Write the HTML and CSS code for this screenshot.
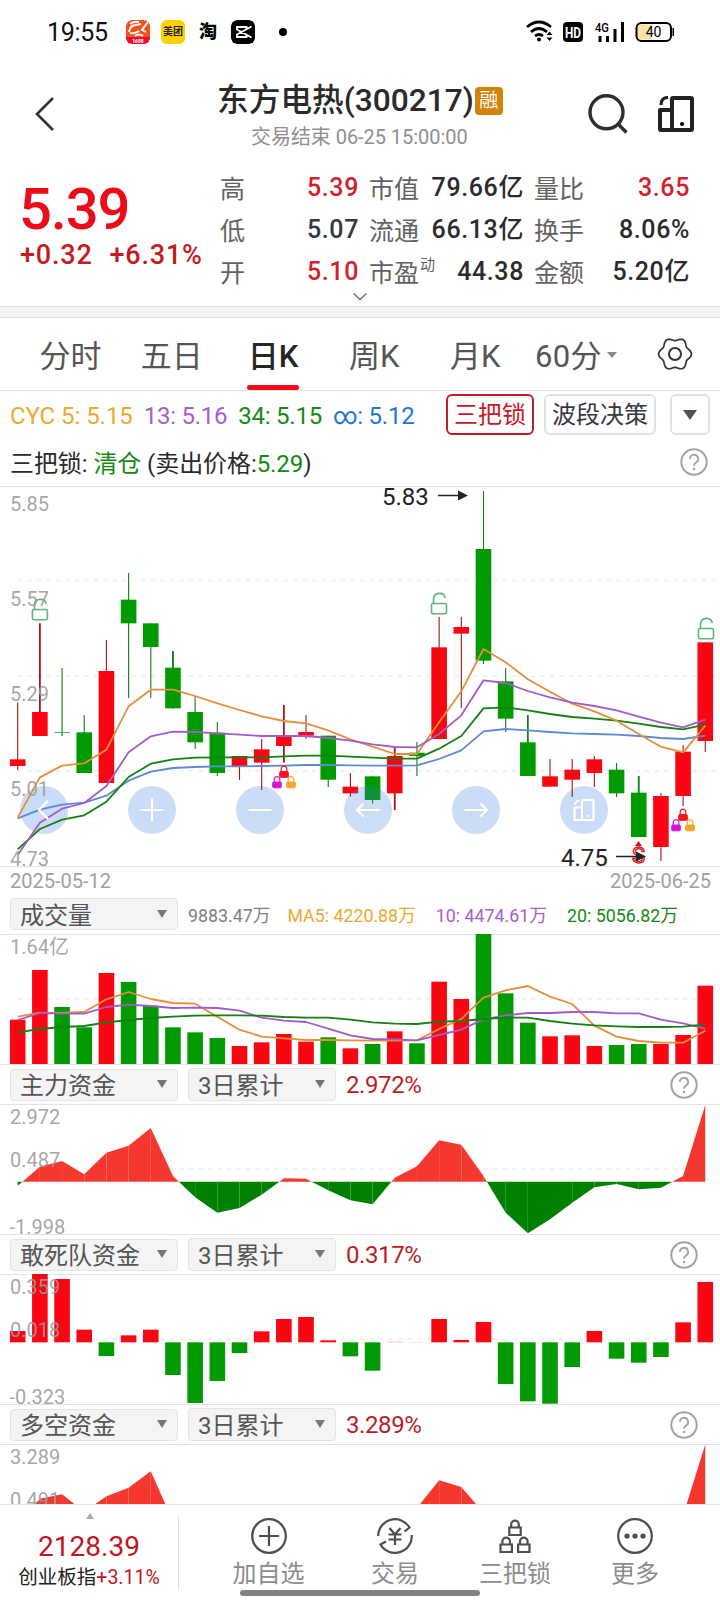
FILE: index.html
```html
<!DOCTYPE html>
<html lang="zh-CN">
<head>
<meta charset="utf-8">
<title>东方电热(300217)</title>
<link rel="stylesheet" href="styles.css">
</head>
<body>
<svg class="defs" width="0" height="0">
  <defs>
    <g id="unlock" fill="none" stroke="#5cb878" stroke-width="1.6"><rect x="-7.5" y="0" width="15" height="10.3" rx="1.5"/><path d="M-5.5 0V-5A6 6 0 0 1 6.3 -5.4"/></g>
    <g id="lock"><rect x="-4.300" y="0.500" width="8.600" height="5.800" rx="1"/><path d="M-2.800 1V-2A2.800 2.800 0 0 1 2.800 -2V1" fill="none" stroke-width="1.2"/></g>
    <g id="trio"><use href="#lock" x="-7" y="10.5" fill="#d715cf" stroke="#d715cf"/><use href="#lock" x="7" y="10.5" fill="#f3a62b" stroke="#f3a62b"/><use href="#lock" fill="#f51521" stroke="#f51521"/></g>
    <g id="phone" fill="none" stroke-width="4" stroke-linejoin="round"><rect x="14" y="2" width="20" height="32" rx="1"/><path d="M14 14H2V33Q2 34 3 34H14"/><path d="M10 1.500Q3 1.500 3 9" stroke-width="3.200"/></g>
    <g id="help"><circle cx="14" cy="14" r="12.7" fill="none" stroke="#a3a3a3" stroke-width="2"/><path d="M9.9 11A4.1 4.1 0 1 1 16 14.5Q14 15.8 14 17.8" fill="none" stroke="#a3a3a3" stroke-width="1.9"/><circle cx="14" cy="21" r="1.3" fill="#a3a3a3"/></g>
  </defs>
</svg>

<header class="status">
  <span class="clock">19:55</span>
  <svg class="app ali" width="24" height="24" viewBox="0 0 24 24"><defs><clipPath id="r1"><rect width="24" height="24" rx="6"/></clipPath></defs><g clip-path="url(#r1)"><rect width="24" height="24" fill="#f4511b"/><rect y="17" width="24" height="7" fill="#e8102c"/><path d="M4 4Q8 1 13 2M3 12Q4 5 10 5L15 4M4 13Q9 14 13 11M22 2L16 10L20 12M9 16Q13 13 17 16" fill="none" stroke="#fff" stroke-width="1.9"/><text x="12" y="23" text-anchor="middle" font-size="5" font-weight="700" fill="#fff">1688</text></g></svg>
  <span class="app meituan">美团</span>
  <span class="app tao">淘</span>
  <svg class="app" width="24" height="24" viewBox="0 0 24 24"><rect width="24" height="24" rx="6" fill="#000"/><path d="M20.500 6.500L6 14.500V17H15.500V14.500M20.500 17.500L6 9.500V7H15.500V9.500" fill="none" stroke="#fff" stroke-width="1.9"/></svg>
  <i class="dot"></i>
  <svg class="signals" width="150" height="24" viewBox="0 0 150 24">
    <g fill="none" stroke="#000" stroke-width="2.7"><path d="M1 7Q13 -3 25 7"/><path d="M5 12Q13 5 21 12"/><path d="M9 16Q13 13 17 16"/></g>
    <circle cx="13" cy="19.500" r="2" /><path d="M20.500 15l3-3.500 3 3.500zM20.500 17.500l3 3.500 3-3.500z"/>
    <rect x="37" y="2" width="20" height="20" rx="4"/><text x="47" y="17.500" text-anchor="middle" fill="#fff" font-size="15" font-weight="700" textLength="16" lengthAdjust="spacingAndGlyphs">HD</text>
    <text x="69" y="12" font-size="13" font-weight="500" textLength="14" lengthAdjust="spacingAndGlyphs">4G</text>
    <path d="M72.500 16h3v6h-3zM80 16h3v6h-3zM87.500 9h3v13h-3zM95 2h3v20h-3z"/>
    <rect x="110.500" y="3" width="34.500" height="18" rx="5" fill="#fff" stroke="#000" stroke-width="2"/><path d="M125 4.500H116Q112 4.500 112 8.500V15.500Q112 19.500 116 19.500H125Z" fill="#fce2a5"/><path d="M146.500 8h1.500v8h-1.500z"/>
    <text x="127.500" y="17" text-anchor="middle" font-size="14">40</text>
  </svg>
</header>

<section class="title-bar">
  <svg class="back" width="24" height="38" viewBox="0 0 24 38"><path d="M20 3L4 19L20 35" fill="none" stroke="#333" stroke-width="2.6"/></svg>
  <div class="heading">
    <h1>东方电热(300217)<span class="badge">融</span></h1>
    <p>交易结束 06-25 15:00:00</p>
  </div>
  <svg class="search" width="42" height="42" viewBox="0 0 42 42"><g fill="none" stroke="#2d2d2d" stroke-width="3.400"><circle cx="19.500" cy="19.300" r="16.500"/><path d="M31 31L39.500 39.500"/></g></svg>
  <svg class="rotate" width="36" height="36" viewBox="0 0 36 36"><use href="#phone" stroke="#222"/><circle cx="24" cy="28" r="2"/></svg>
</section>

<section class="quote">
  <div class="price">
    <strong>5.39</strong>
    <span>+0.32</span><span>+6.31%</span>
  </div>
  <dl class="stats">
    <div><dt>高</dt><dd class="up">5.39</dd></div><div><dt>市值</dt><dd>79.66亿</dd></div><div><dt>量比</dt><dd class="up">3.65</dd></div>
    <div><dt>低</dt><dd class="flat">5.07</dd></div><div><dt>流通</dt><dd>66.13亿</dd></div><div><dt>换手</dt><dd>8.06%</dd></div>
    <div><dt>开</dt><dd class="up">5.10</dd></div><div><dt>市盈<sup>动</sup></dt><dd>44.38</dd></div><div><dt>金额</dt><dd>5.20亿</dd></div>
  </dl>
  <svg class="expand" width="16" height="9" viewBox="0 0 16 9"><path d="M1.500 1.500L8 7.500L14.500 1.500" fill="none" stroke="#777" stroke-width="1.500"/></svg>
</section>
<div class="divider"></div>

<nav class="tabs">
  <span>分时</span><span>五日</span><span class="active">日K</span><span>周K</span><span>月K</span><span class="drop">60分<i></i></span>
  <svg width="36" height="36" viewBox="-18 -18 36 36"><path id="gear" fill="none" stroke="#333" stroke-width="1.700" stroke-linejoin="round"/><circle r="6" fill="none" stroke="#333" stroke-width="2"/></svg>
</nav>

<section class="indicator">
  <div class="cyc"><span class="c-orange">CYC 5: 5.15</span><span class="c-purple">13: 5.16</span><span class="c-green">34: 5.15</span><span class="c-blue">∞: 5.12</span></div>
  <button class="chip on">三把锁</button><button class="chip">波段决策</button><button class="chip menu"><i></i></button>
</section>
<section class="signal">
  <p>三把锁: <b>清仓</b> (卖出价格:<b>5.29</b>)</p>
  <svg width="28" height="28"><use href="#help"/></svg>
</section>

<svg class="chart" id="kline" width="720" height="380" viewBox="0 0 720 380">
  <path class="grid" d="M18 94.500H717M18 190H717M18 285H717"/>
  <g class="pads"><circle cx="44" cy="324" r="24"/><circle cx="152" cy="324" r="24"/><circle cx="260" cy="324" r="24"/><circle cx="476" cy="324" r="24"/><circle cx="584" cy="324" r="24"/></g>
  <g class="plot"></g>
  <use href="#unlock" x="39.900" y="123.500"/><use href="#unlock" x="439" y="117.500"/><use href="#unlock" x="706" y="142.500"/>
  <use href="#trio" x="284" y="285"/><use href="#trio" x="683" y="328"/>
  <path d="M635 360l3.500-5 3.500 5z" fill="#d01622"/>
  <text x="638.500" y="377" text-anchor="middle" font-size="22" fill="#fff" stroke="#d01622" stroke-width="1.300">S</text>
  <g class="axis"><text x="10" y="25.300">5.85</text><text x="10" y="120">5.57</text><text x="10" y="215">5.29</text><text x="10" y="310">5.01</text><text x="10" y="379.500">4.73</text></g>
  <g class="mark"><text x="382" y="19">5.83</text><text x="561" y="379.500">4.75</text><path d="M438 9.500H460M616 370.500H638" stroke="#222" stroke-width="1.300"/><path d="M458 4.500l10 5-10 5zM636 365.500l10 5-10 5z"/></g>
  <g fill="none" stroke="#fff" stroke-width="2"><path d="M48 315L39 324L48 333M140.500 324H163.500M152 312.500V335.500M248.500 324H271.500M379.500 324H357M363.500 317.500L357 324L363.500 330.500M464.500 324H487M480.500 317.500L487 324L480.500 330.500"/><rect x="582" y="314" width="11.500" height="20" rx="1"/><path d="M582 321.500H574.500V334H582M579.500 314.500Q575 315 575 319"/></g><circle cx="588" cy="330" r="1.200" fill="#fff"/>
</svg>
<div class="dates"><span>2025-05-12</span><span>2025-06-25</span></div>

<div class="panel-head">
  <button class="select">成交量<i></i></button>
  <div class="vols"><span>9883.47万</span><span class="c-orange">MA5: 4220.88万</span><span class="c-purple">10: 4474.61万</span><span class="c-green">20: 5056.82万</span></div>
</div>
<svg class="chart sub" id="volume" width="720" height="130" viewBox="0 0 720 130">
  <path class="grid" d="M18 65H697"/><g class="plot"></g><g class="axis"><text x="10" y="20">1.64亿</text></g>
</svg>

<div class="panel-head"><button class="select">主力资金<i></i></button><button class="select short">3日累计<i></i></button><b>2.972%</b><svg width="28" height="28"><use href="#help"/></svg></div>
<svg class="chart sub" id="main" width="720" height="130" viewBox="0 0 720 130">
  <path class="grid" d="M18 65H697"/><g class="plot"></g><g class="axis"><text x="10" y="20">2.972</text><text x="10" y="62.700">0.487</text><text x="9.500" y="129.700">-1.998</text></g>
</svg>

<div class="panel-head"><button class="select">敢死队资金<i></i></button><button class="select short">3日累计<i></i></button><b>0.317%</b><svg width="28" height="28"><use href="#help"/></svg></div>
<svg class="chart sub" id="squad" width="720" height="130" viewBox="0 0 720 130">
  <path class="grid" d="M18 65H697"/><g class="plot"></g><g class="axis"><text x="10" y="20">0.359</text><text x="10" y="62.700">0.018</text><text x="9.500" y="129.700">-0.323</text></g>
</svg>

<div class="panel-head"><button class="select">多空资金<i></i></button><button class="select short">3日累计<i></i></button><b>3.289%</b><svg width="28" height="28"><use href="#help"/></svg></div>
<svg class="chart sub" id="bulls" width="720" height="60" viewBox="0 0 720 60">
  <g class="plot"></g><g class="axis"><text x="10" y="20">3.289</text><text x="10" y="62.700">0.491</text></g>
</svg>

<footer>
  <div class="index"><i></i><strong>2128.39</strong><p>创业板指<em>+3.11%</em></p></div>
  <div class="action"><svg width="40" height="40" viewBox="-20 -20 40 40"><circle r="16.800"/><path d="M-10 0H10M0-10V10"/></svg>加自选</div>
  <div class="action"><svg width="40" height="40" viewBox="-20 -20 40 40"><path d="M-16.800 0A16.800 16.800 0 0 1 14.500-8.500L9.500-4.500M16.800-1A16.800 16.800 0 0 1-14.500 8.500L-9 5.500"/><path d="M-5.500-8L0-1.500L5.500-8M-6.500-1.500H6.500M-6.500 3.500H6.500M0-1.500V9"/></svg>交易</div>
  <div class="action"><svg width="40" height="40" viewBox="-20 -20 40 40"><path d="M-5.700-8.500H5.700V-1H-5.700ZM-3.800-8.500V-11.500A3.800 3.800 0 0 1 3.800-11.500V-8.500M-14.500 8.500H-3.100V16H-14.500ZM-12.600 8.500V5.500A3.800 3.800 0 0 1-5 5.500V8.500M3.100 8.500H14.500V16H3.100ZM5 8.500V5.500A3.800 3.800 0 0 1 12.600 5.500V8.500"/></svg>三把锁</div>
  <div class="action"><svg width="40" height="40" viewBox="-20 -20 40 40"><circle r="16.800"/><g fill="#4c4d55" stroke="none"><circle cx="-8" r="2.600"/><circle r="2.600"/><circle cx="8" r="2.600"/></g></svg>更多</div>
  <div class="home"></div>
</footer>
<script src="charts.js"></script>
</body>
</html>
```

FILE: styles.css
```css
* { box-sizing: border-box; margin: 0; padding: 0; }
body { width: 720px; height: 1600px; overflow: hidden; background: #fff; color: #2b2b2b; font-family: Roboto, "Noto Sans CJK SC", sans-serif; position: relative; }
svg { display: block; flex: none; }
svg text { font-family: Roboto, "Noto Sans CJK SC", sans-serif; }
.defs { position: absolute; }
i { font-style: normal; }
button { font: inherit; color: inherit; }

.status { height: 62px; padding: 2px 0 0 47px; display: flex; align-items: center; }
.clock { width: 79px; font-size: 25px; color: #111; white-space: nowrap; letter-spacing: -.3px; }
.app { width: 24px; height: 24px; border-radius: 6px; margin-right: 11px; }
.meituan { background: #ffd100; font-size: 10px; font-weight: 700; line-height: 24px; text-align: center; color: #222; }
.tao { font-size: 18px; line-height: 24px; font-weight: 900; text-align: center; color: #000; }
.dot { width: 8px; height: 8px; border-radius: 50%; background: #000; margin-left: 13px; }
.signals { margin-left: 239px; }

.title-bar { height: 106px; display: flex; }
.back { margin: 33px 0 0 33px; }
.heading { width: 381px; margin-left: 160px; padding-top: 18px; }
h1 { font-size: 31.7px; font-weight: 500; line-height: 42px; display: flex; align-items: center; color: #2a2a2a; white-space: nowrap; }
.badge { width: 28px; height: 28px; border-radius: 4px; background: #d3820c; color: #fff; font-size: 19px; font-weight: 400; line-height: 27px; margin: 0 0 1px 1px; text-align: center; }
.heading p { font-size: 20px; line-height: 30px; color: #8f8f8f; padding-left: 34px; white-space: nowrap; letter-spacing: -.05px; }
.search { margin: 31px 29px 0 -11px; }
.rotate { margin-top: 34px; }

.quote { height: 138px; display: grid; grid-template-columns: 199px 1fr; padding-left: 21px; position: relative; }
.price { padding-top: 9px; color: #c61a22; font-size: 27px; font-weight: 500; line-height: 28px; white-space: nowrap; letter-spacing: .8px; }
.price strong { display: block; font-size: 58px; font-weight: 500; line-height: 65px; color: #ec0b19; letter-spacing: -1.2px; margin: 0 0 -1px -2px; }
.price span { margin-right: 17px; }
.price span:first-of-type { margin-left: -1px; }
.stats { display: grid; grid-template-columns: 138px 154px 155px; column-gap: 11px; grid-auto-rows: 42px; padding-top: 1px; }
.stats div { display: flex; justify-content: space-between; align-items: center; line-height: 42px; }
.stats dt { font-size: 25px; color: #626262; white-space: nowrap; }
.stats dd { font-size: 25px; font-weight: 500; white-space: nowrap; letter-spacing: .6px; padding-bottom: 4px; margin-right: -1px; }
.stats sup { font-size: 15px; line-height: 1; vertical-align: 12px; margin-left: 1px; }
.up { color: #d2222b; }
.flat { color: #343843; }
.expand { position: absolute; left: 352px; top: 124px; }
.divider { height: 12px; background: #f4f4f4; border: solid #e0e0e0; border-width: 1px 0; }

.tabs { height: 73px; border-bottom: 1px solid #e3e3e3; display: flex; padding-left: 20px; font-size: 31px; line-height: 78px; color: #555; }
.tabs span { width: 101.2px; text-align: center; white-space: nowrap; }
.tabs .active { font-weight: 500; color: #252525; display: flex; flex-direction: column; align-items: center; }
.tabs .active::after { content: ""; width: 52px; height: 6px; border-radius: 3px; background: #f20a1a; margin-top: -11px; }
.tabs .drop { display: flex; padding-left: 9px; letter-spacing: .3px; }
.tabs .drop i { height: 0; border: solid transparent; border-width: 6px 5px 0; border-top-color: #888; margin: 34px 0 0 5px; }
.tabs svg { margin: 18px 0 0 30px; }

.indicator { height: 48px; display: flex; padding: 3px 10px 0 10px; font-size: 24px; }
.cyc { display: flex; gap: 11px; width: 436px; line-height: 44px; white-space: nowrap; letter-spacing: -.25px; }
.cyc span:first-child { letter-spacing: -.05px; }
.c-orange { color: #eba92f; }
.c-purple { color: #a95dcb; }
.c-green { color: #138a13; }
.c-blue { color: #2078d4; }
.chip { height: 41px; border: 2px solid #e2e2e4; border-radius: 6px; background: #fff; line-height: 36px; width: 112px; margin-right: 14px; color: #343843; white-space: nowrap; }
.chip.on { width: 88px; border-color: #bd1f29; color: #c81824; margin-right: 10px; }
.chip.menu { width: 40px; margin: 0; display: flex; align-items: center; justify-content: center; }
.chip i { border: solid transparent; border-width: 10px 7px 0; border-top-color: #50525a; }
.signal { height: 47px; display: flex; justify-content: space-between; padding: 9px 12px 0 10px; font-size: 24px; line-height: 32px; letter-spacing: -.08px; }
.signal b { font-weight: 400; color: #138a13; }

.chart { background: linear-gradient(#e3e3e3, #e3e3e3) top / 100% 1px no-repeat; overflow: hidden; }
.grid { stroke: #ededed; stroke-width: 1.5; stroke-dasharray: 4 5.500; fill: none; }
.axis { font-size: 20px; fill: #9b9b9b; fill-opacity: .9; }
.mark { font-size: 24px; fill: #222; }
.pads { fill: #cbdcf6; }
.dates { height: 31px; border-top: 1px solid #e3e3e3; display: flex; justify-content: space-between; padding: 0 9px 0 10px; font-size: 20px; line-height: 29px; color: #a0a0a0; }

.panel-head { height: 40px; border-top: 1px solid #e3e3e3; display: flex; align-items: center; padding: 0 22px 0 10px; }
.dates + .panel-head { height: 37px; border-top: 0; padding-bottom: 3px; }
.select { width: 168px; height: 32px; border: 1px solid #e4e4e4; border-radius: 4px; background: #f4f4f4; color: #555; font-size: 24px; line-height: 30px; display: flex; align-items: center; justify-content: space-between; padding: 3px 10px 0 9px; white-space: nowrap; margin-right: 10px; }
.select.short { width: 148px; height: 33px; margin: -1px 10px 0 0; }
.select i { border: solid transparent; border-width: 8px 5.5px 0; border-top-color: #777; margin-bottom: 4px; }
.panel-head b { font-weight: 400; font-size: 24px; color: #bc1d25; flex: 1; letter-spacing: -.4px; }
.vols { display: flex; font-size: 17.8px; color: #808080; gap: 20px; white-space: nowrap; margin-top: -1px; }
.vols span:first-child { margin-right: -3px; }

footer { height: 96px; border-top: 1px solid #e3e3e3; display: flex; position: relative; }
.index { width: 179px; height: 75px; margin-top: 10px; border-right: 1px solid #e0e0e0; text-align: center; }
.index i { display: block; width: 0; border: solid transparent; border-width: 0 4px 6px; border-bottom-color: #aaa; margin: -2px 0 0 86px; }
.index strong { display: block; font-size: 28px; font-weight: 400; line-height: 34px; margin-top: 11px; color: #c1151e; }
.index p { font-size: 19.500px; line-height: 28px; white-space: nowrap; color: #222; }
.index em { font-style: normal; color: #c1151e; font-size: 19.500px; }
.action { width: 120px; display: flex; flex-direction: column; align-items: center; padding-top: 11px; font-size: 24px; line-height: 37px; color: #8c8c8c; }
.index + .action { margin-left: 27px; width: 125px; margin-right: 4px; }
.action svg { fill: none; stroke: #4c4d55; stroke-width: 2.2; }
.home { position: absolute; left: 240px; top: 85px; width: 240px; height: 6px; border-radius: 3px; background: #828282; }
```

FILE: charts.js
```js
const NS = "http://www.w3.org/2000/svg";
const RED = "#fa0512", GREEN = "#029a02";
const X = i => 17.7 + 22.18 * i;

function add(id, tag, attrs) {
  const el = document.createElementNS(NS, tag);
  for (const k in attrs) el.setAttribute(k, attrs[k]);
  document.querySelector("#" + id + " .plot").appendChild(el);
}
function rect(id, i, top, bottom, fill) {
  add(id, "rect", { x: X(i) - 7.8, y: top, width: 15.6, height: Math.max(bottom - top, 0.7), fill });
}
function line(id, values, off, stroke) {
  add(id, "polyline", { points: values.map((v, i) => X(i) + "," + (v / 3 - off)).join(" "), fill: "none", stroke, "stroke-width": 1.8, "stroke-linejoin": "round" });
}

const dirs = "rrggrgggggrrrrgrgrgrrgggrrrggrrr";
const colour = i => dirs[i] === "r" ? RED : GREEN;

// high, low, body top, body bottom
const candles = [[667,870,838,858],[430,768,696,768],[564,768,757,759],[705,879,757,879],[480,909,573,909],[279,654,359,430],[430,654,430,501],[513,685,563,685],[648,807,696,787],[726,888,758,879],[828,900,828,858],[777,930,808,848],[675,848,767,798],[705,776,756,767],[767,921,767,899],[879,950,920,940],[889,971,889,960],[800,990,828,940],[786,888,818,828],[411,777,502,777],[411,684,441,461],[33,552,207,542],[564,756,604,716],[705,888,787,888],[837,920,889,920],[837,951,869,899],[828,921,838,879],[849,951,869,940],[888,1071,938,1071],[939,1143,948,1101],[795,978,815,948],[487,816,487,783]];
const heavy = [1, 7, 12, 17, 23, 28];
candles.forEach(([h, l, t, b], i) => {
  const w = heavy.includes(i) ? 1.8 : 1.1;
  add("kline", "rect", { x: X(i) - w / 2, y: h / 3 - 6, width: w, height: (l - h) / 3, fill: dirs[i] === "r" ? "#a5161c" : "#127d12" });
  rect("kline", i, t / 3 - 6, b / 3 - 6, colour(i));
});
// This round button tints the two candles it overlaps.
add("kline", "circle", { cx: 368, cy: 324, r: 24, fill: "#3277db", "fill-opacity": 0.25 });
line("kline", [1015,989,974,968,947,902,875,864,861,859,859,858,857,855,855,856,857,857,856,837,811,754,747,751,756,760,762,764,768,774,777,767], 6, "#5b8bd0");
line("kline", [1108,1047,1019,1006,965,891,851,838,833,832,832,832,829,827,827,830,833,836,836,806,768,685,682,691,702,711,716,722,731,741,748,734], 6, "#138013");
line("kline", [1013,892,857,850,809,679,629,629,648,670,690,709,723,730,751,778,800,822,822,727,634,507,547,598,635,671,694,722,762,800,817,737], 6, "#e29138");
line("kline", [1125,1028,986,969,918,817,769,755,756,760,764,768,768,768,774,782,793,801,802,762,706,601,609,633,652,668,678,691,710,728,742,719], 6, "#a45bc8");

[479,330,441,502,339,366,437,502,517,534,558,547,522,545,532,565,552,514,550,365,417,222,400,488,529,526,558,555,552,552,525,377]
  .forEach((v, i) => rect("volume", i, v / 3 - 74, 130, colour(i)));
line("volume", [470,458,459,456,418,396,417,429,431,470,509,530,535,540,540,541,542,542,541,507,477,413,391,378,410,432,497,530,543,548,548,512], 74, "#e29138");
line("volume", [480,459,461,461,441,434,438,444,443,444,452,473,482,486,506,526,537,538,541,525,509,478,466,459,459,456,456,460,460,479,490,506], 74, "#a45bc8");
line("volume", [517,507,501,498,487,480,474,470,467,466,466,467,471,473,473,479,487,491,492,485,483,477,473,473,483,491,496,499,501,501,500,493], 74, "#138013");

// Areas change colour where they cross the zero line.
function area(id, values, zero, off) {
  const poly = (pts, up) => add(id, "polygon", { points: pts.map(([x, v]) => x + "," + (v / 3 - off)).join(" "), fill: up ? "#f43830" : "#008000" });
  for (let i = 0; i + 1 < values.length; i++) {
    const a = values[i], b = values[i + 1], x1 = X(i), x2 = X(i + 1);
    if ((a - zero) * (b - zero) < 0) {
      const m = x1 + (x2 - x1) * (zero - a) / (b - a);
      poly([[x1, zero], [x1, a], [m, zero]], a < zero);
      poly([[m, zero], [x2, b], [x2, zero]], b < zero);
    } else {
      poly([[x1, zero], [x1, a], [x2, b], [x2, zero]], a < zero || b < zero);
    }
  }
}
area("main", [977,920,903,943,878,857,804,948,1012,1058,1044,1004,955,956,991,1021,1033,953,919,841,854,948,1058,1120,1078,1028,982,972,988,983,948,735], 965, 244);
area("bulls", [885,806,793,845,799,773,724,873,910,940,930,900,880,880,890,900,910,870,834,751,771,848,900,940,930,920,900,890,890,890,856,643], 871, 214);

[303,132,147,299,378,316,299,435,519,453,369,304,267,261,331,379,422,335,337,267,330,276,462,514,521,411,303,386,398,381,277,156]
  .forEach((v, i) => rect("squad", i, Math.min(v, 337) / 3 - 44, Math.max(v, 337) / 3 - 44, i === 17 ? "#e9b5b8" : i === 18 ? "#dfe6e3" : v < 337 ? RED : GREEN));

// Six-lobed settings gear.
let d = "";
for (let a = 0; a < 360; a += 4) {
  const r = 14.9 + 1.5 * Math.cos(6 * a * Math.PI / 180);
  d += (a ? "L" : "M") + (r * Math.cos(a * Math.PI / 180)).toFixed(2) + " " + (r * Math.sin(a * Math.PI / 180)).toFixed(2);
}
document.getElementById("gear").setAttribute("d", d + "Z");
```
